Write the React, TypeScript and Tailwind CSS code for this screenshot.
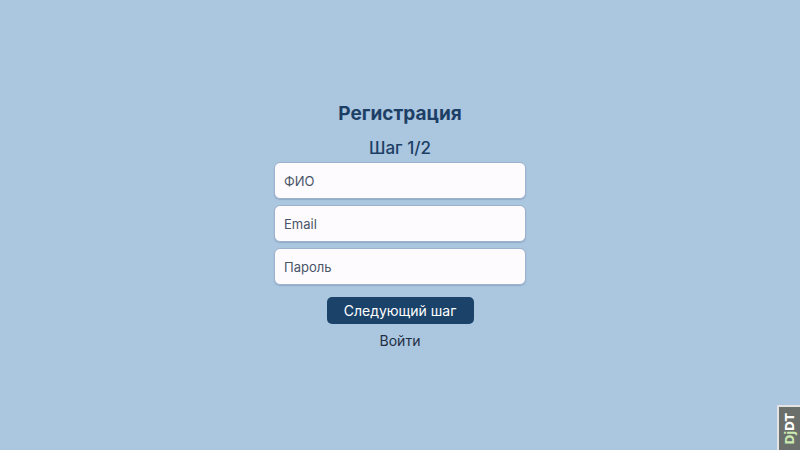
import React from "react";

export default function App() {
  return (
    <div
      className="relative flex h-[450px] w-full flex-col items-center bg-[#abc6df] pt-[102px]"
      style={{ fontFamily: "Inter, 'Noto Sans', sans-serif" }}
    >
      <h1 className="text-[19px] font-bold leading-6 text-[#1d3f66]">Регистрация</h1>
      <h2 className="mt-[10px] text-[17px] font-medium leading-6 text-[#1d3f66]">Шаг 1/2</h2>

      <form className="mt-[2px] flex w-[252px] flex-col gap-[6px]">
        {["ФИО", "Email", "Пароль"].map((p) => (
          <input
            key={p}
            type={p === "Пароль" ? "password" : "text"}
            placeholder={p}
            className="h-[37px] w-full rounded-[6px] border border-[#9cb2cc] bg-[#fdfbfe] px-[9px] text-[13px] text-[#2d3748] shadow-[0_1px_1px_rgba(60,90,130,0.25)] outline-none placeholder:text-[#4a5568]"
          />
        ))}
      </form>

      <button className="mt-[12px] h-[27px] w-[147px] rounded-[5px] bg-[#1b4269] text-[14px] text-white">
        Следующий шаг
      </button>
      <a className="mt-[7px] text-[14px] leading-5 text-[#1f2f44]" href="#">
        Войти
      </a>

      {/* debug toolbar handle */}
      <div className="absolute bottom-0 right-0 flex h-[45px] w-[23px] items-center justify-center border-2 border-r-0 border-b-0 border-[#e3e3e3] bg-[#6b6f6b]">
        <span
          className="-rotate-90 whitespace-nowrap text-[12px] font-bold tracking-tight"
          style={{ fontFamily: "'DejaVu Sans', sans-serif" }}
        >
          <span className="text-[#cbe9b0]">Dj</span>
          <span className="text-white">DT</span>
        </span>
      </div>
    </div>
  );
}
